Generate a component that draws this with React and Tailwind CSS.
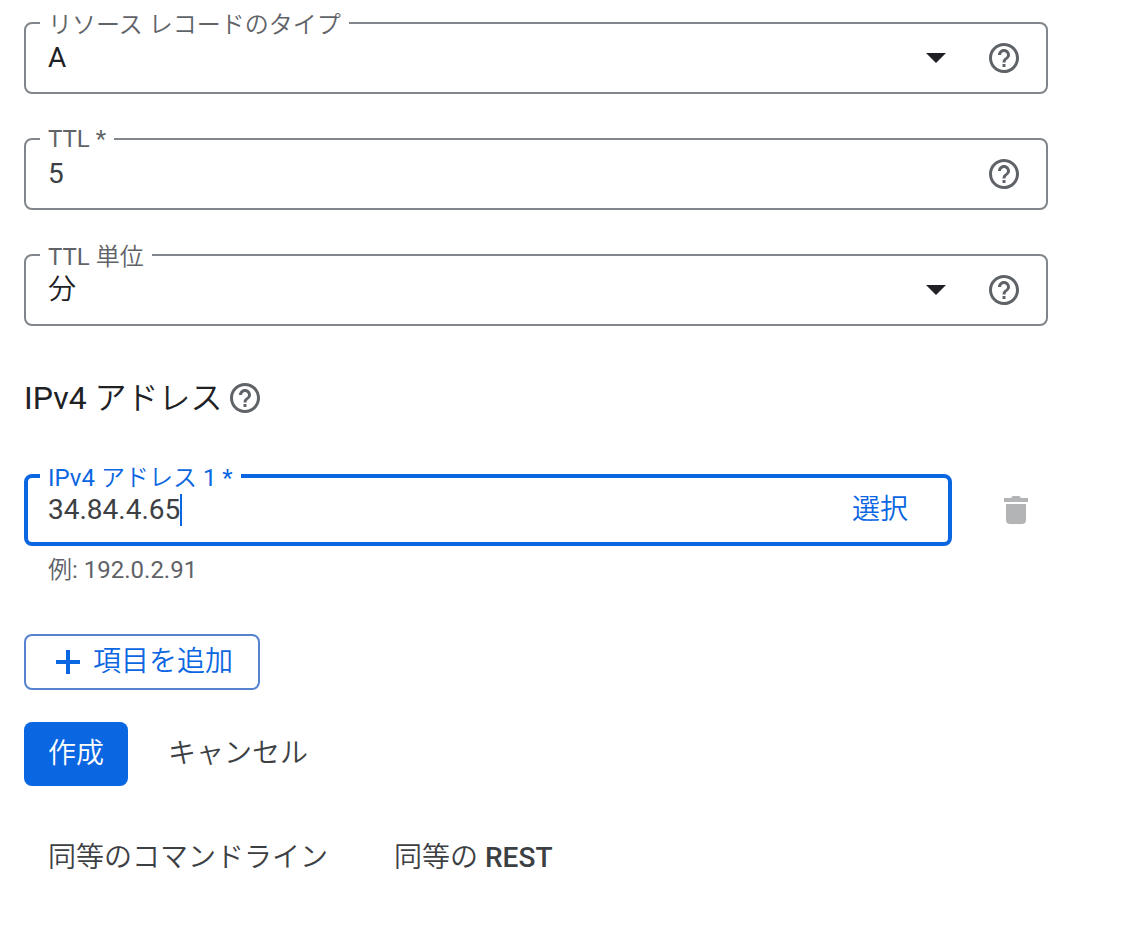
import React, { useState } from 'react';
import { MdHelpOutline } from 'react-icons/md';

const FONT = "font-['Roboto','Noto_Sans_CJK_JP',sans-serif]";

const HelpButton = ({ label }) => (
  <button type="button" aria-label={label} className="shrink-0 text-[#5f6368]">
    <MdHelpOutline className="size-9" />
  </button>
);

// Japanese labels sit a little lower in the outline than Latin ones
const JaLabel = ({ children }) => <span className="block pt-1">{children}</span>;

const Field = ({ id, label, children }) => (
  <fieldset className="min-w-0 rounded-lg border-2 border-[#80868b] pl-3.5 pr-6 pb-3">
    <legend className="px-2 text-2xl/normal text-[#5f6368]">
      <label htmlFor={id} className="flex h-[26px] items-center whitespace-nowrap">
        {label}
      </label>
    </legend>
    <div className="flex h-11 items-center gap-10 pl-2">{children}</div>
  </fieldset>
);

const SelectBox = ({ id, options, className }) => (
  <div className="relative min-w-0 flex-1">
    <select
      id={id}
      className={`block w-full appearance-none bg-transparent text-[28px]/10 text-[#202124] outline-none ${className}`}
    >
      {options.map((option) => (
        <option key={option}>{option}</option>
      ))}
    </select>
    <svg
      viewBox="0 0 20 10"
      className="pointer-events-none absolute right-0 top-1/2 h-2.5 w-5 -translate-y-1/2 fill-[#202124]"
    >
      <path d="M0 0h20L10 10z" />
    </svg>
  </div>
);

const App = () => {
  const [ttl, setTtl] = useState('5');
  const [address, setAddress] = useState('34.84.4.65');

  return (
    <form className={`${FONT} min-h-screen bg-white pl-6 pr-[76px] pt-2.5 pb-10 text-[28px]/10 text-[#3c4043]`}>
      <div className="flex flex-col gap-8">
        <Field id="type" label={<JaLabel><span className="font-[350]">リソース レコードのタイプ</span></JaLabel>}>
          <SelectBox id="type" options={['A']} className="font-normal" />
          <HelpButton label="リソース レコードのタイプ" />
        </Field>

        <Field id="ttl" label="TTL *">
          <input
            id="ttl"
            value={ttl}
            onChange={(e) => setTtl(e.target.value)}
            className="min-w-0 flex-1 bg-transparent outline-none"
          />
          <HelpButton label="TTL" />
        </Field>

        <Field id="unit" label={<JaLabel>TTL <span className="font-[350]">単位</span></JaLabel>}>
          <SelectBox id="unit" options={['分']} className="font-[350]" />
          <HelpButton label="TTL 単位" />
        </Field>
      </div>

      <div className="mt-12 flex h-12 items-center gap-1">
        <h2 className="text-[32px]/normal text-[#202124]">
          IPv4 <span className="font-[350]">アドレス</span>
        </h2>
        <HelpButton label="IPv4 アドレス" />
      </div>

      {/* Focused address row */}
      <div className="mt-[41px] flex items-center">
        <fieldset className="min-w-0 flex-1 rounded-lg border-4 border-[#0b66e1] pl-3 pr-10 pb-[11px]">
          <legend className="px-2 text-2xl/normal text-[#0b66e1]">
            <label htmlFor="address" className="flex h-[26px] items-center whitespace-nowrap">
              <JaLabel>
                IPv4 <span className="font-[350]">アドレス</span> 1 *
              </JaLabel>
            </label>
          </legend>
          <div className="flex h-[42px] items-center pl-2">
            <input
              id="address"
              value={address}
              onChange={(e) => setAddress(e.target.value)}
              className="field-sizing-content bg-transparent caret-transparent outline-none"
            />
            <span className="h-8 w-0.5 bg-[#0b66e1]" />
            <button type="button" className="ml-auto font-[350] text-[#0b66e1]">
              選択
            </button>
          </div>
        </fieldset>
        <button type="button" aria-label="削除" className="ml-[52px] mr-5 mt-2.5">
          <svg viewBox="0 0 24 28" className="h-7 w-6 fill-[#b3b4b6]">
            <path d="M0 2h7l1.5-2h7L17 2h7v4H0z" />
            <path d="M2 8h20v16a4 4 0 0 1-4 4H6a4 4 0 0 1-4-4z" />
          </svg>
        </button>
      </div>
      <p className="mt-2 pl-6 text-2xl/8 text-[#5f6368]">
        <span className="font-[350]">例</span>: 192.0.2.91
      </p>

      <button
        type="button"
        className="mt-12 flex h-14 items-center gap-[13px] rounded-lg border-2 border-[#5583cf] pl-[30px] pr-[25px] font-[350] text-[#0b66e1]"
      >
        <svg viewBox="0 0 24 24" className="size-6 fill-[#0b66e1]">
          <path d="M10 0h4v10h10v4H14v10h-4V14H0v-4h10z" />
        </svg>
        項目を追加
      </button>

      <div className="mt-8 flex items-center gap-4 font-[350]">
        <button type="submit" className="h-16 rounded-lg bg-[#0b66e1] px-6 text-white">
          作成
        </button>
        <button type="button" className="h-16 px-6">
          キャンセル
        </button>
      </div>

      <div className="mt-10 flex items-center gap-[18px]">
        <button type="button" className="h-16 px-6 font-[350]">
          同等のコマンドライン
        </button>
        <button type="button" className="h-16 px-6 font-medium">
          <span className="font-[350]">同等の</span> REST
        </button>
      </div>
    </form>
  );
};

export default App;
